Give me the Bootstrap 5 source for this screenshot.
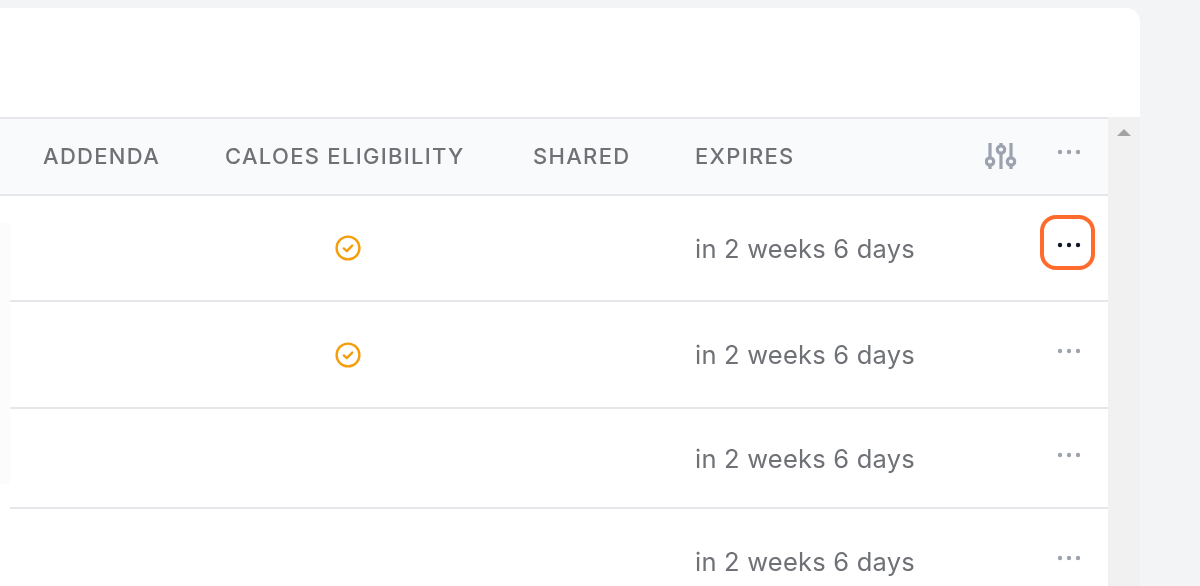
<!DOCTYPE html>
<html lang="en">
<head>
  <meta charset="UTF-8" />
  <title>Permits</title>
  <link href="https://cdn.jsdelivr.net/npm/bootstrap@5.3.0/dist/css/bootstrap.min.css" rel="stylesheet" />
  <style>
    html, body { height: 586px; overflow: hidden; }
    body { background: #f3f4f6; font-family: Inter, "Liberation Sans", sans-serif; }
    .sheet { width: 1140px; margin-top: 8px; background: #fff; border-top-right-radius: 14px; filter: blur(.45px); }
    .sheet-top { height: 109px; }
    .doc-table { width: 1108px; table-layout: fixed; border-collapse: separate; border-spacing: 0; }
    .doc-table th { height: 79px; background: #f9fafb; border-top: 2px solid #e5e7eb; border-bottom: 2px solid #e5e7eb; color: #6e7176; font-size: 22px; font-weight: 500; letter-spacing: 1.3px; vertical-align: middle; padding: 0; white-space: nowrap; }
    .doc-table td { border-bottom: 2px solid #e5e7eb; color: #6e7176; font-size: 25.5px; letter-spacing: .22px; vertical-align: middle; padding: 2px 0 0; white-space: nowrap; }
    .doc-table td.gutter { border-bottom: 0; }
    .tint-start { background: linear-gradient(#fff 27px, #fcfcfd 27px); }
    .tint-full { background: #fcfcfd; }
    .tint-end { background: linear-gradient(#fcfcfd 75px, #fff 75px); }
    .row-first { height: 106px; }
    .row-a { height: 107px; }
    .row-b { height: 100px; }
    .row-c { height: 104px; }
    .doc-table .pad-addenda { padding-left: 33px; }
    .check-mark { display: block; margin: 0 0 2px 110px; }
    .doc-table td.no-line { border-bottom: 0; }
    .tools { display: flex; align-items: center; }
    .dots-box { width: 55px; height: 55px; border: 4.5px solid transparent; border-radius: 16px; background: none; padding: 0; display: flex; align-items: center; justify-content: center; margin-left: 55px; margin-bottom: 13px; }
    .dots-box.is-marked { border-color: #ff6b2c; }
    .tools .dots-box { margin-left: 23px; margin-bottom: 14px; }
    .dots-icon { margin: 4px 0 0 2px; }
    .side-rail { width: 32px; background: #f1f1f1; }
    .rail-arrow { width: 0; height: 0; margin: 12px 0 0 9px; border-left: 7px solid transparent; border-right: 7px solid transparent; border-bottom: 7px solid #a3a3a3; }
  </style>
</head>
<body>

  <div class="sheet">
    <div class="sheet-top"></div>
    <div class="d-flex">
      <table class="doc-table">
        <colgroup>
          <col style="width:10px"><col style="width:215px"><col style="width:308px"><col style="width:162px"><col style="width:290px"><col style="width:123px">
        </colgroup>
        <thead>
          <tr>
            <th></th>
            <th class="pad-addenda">ADDENDA</th>
            <th>CALOES ELIGIBILITY</th>
            <th>SHARED</th>
            <th>EXPIRES</th>
            <th>
              <div class="tools">
                <svg width="32" height="32" viewBox="0 0 32 32" fill="none" stroke="#9ca3af" stroke-width="3.2" aria-hidden="true">
                  <path d="M5 2v15M5 24v4M16 2v3M16 12v16M26 2v15M26 24v4"/>
                  <circle cx="5" cy="20.5" r="3.7"/><circle cx="16" cy="8.5" r="3.7"/><circle cx="26" cy="20.5" r="3.7"/>
                </svg>
                <button type="button" class="dots-box">
                  <svg class="dots-icon" width="26" height="6" viewBox="0 0 26 6" fill="#9ca3af" aria-hidden="true"><circle cx="4" cy="3" r="2.2"/><circle cx="13" cy="3" r="2.2"/><circle cx="22" cy="3" r="2.2"/></svg>
                </button>
              </div>
            </th>
          </tr>
        </thead>
        <tbody>
          <tr class="row-first">
            <td class="gutter tint-start"></td><td></td>
            <td>
              <svg class="check-mark" width="26" height="26" viewBox="0 0 26 26" fill="none" stroke="#f59e0b" stroke-width="2.4" stroke-linecap="round" stroke-linejoin="round" aria-hidden="true"><circle cx="13" cy="13" r="11.4"/><path d="M8.8 13.4l3 2.8 5.4-5.6"/></svg>
            </td>
            <td></td><td>in 2 weeks 6 days</td>
            <td>
              <button type="button" class="dots-box is-marked">
                <svg class="dots-icon" width="26" height="6" viewBox="0 0 26 6" fill="#111827" aria-hidden="true"><circle cx="4" cy="3" r="2.2"/><circle cx="13" cy="3" r="2.2"/><circle cx="22" cy="3" r="2.2"/></svg>
              </button>
            </td>
          </tr>
          <tr class="row-a">
            <td class="gutter tint-full"></td><td></td>
            <td>
              <svg class="check-mark" width="26" height="26" viewBox="0 0 26 26" fill="none" stroke="#f59e0b" stroke-width="2.4" stroke-linecap="round" stroke-linejoin="round" aria-hidden="true"><circle cx="13" cy="13" r="11.4"/><path d="M8.8 13.4l3 2.8 5.4-5.6"/></svg>
            </td>
            <td></td><td>in 2 weeks 6 days</td>
            <td>
              <button type="button" class="dots-box">
                <svg class="dots-icon" width="26" height="6" viewBox="0 0 26 6" fill="#9ca3af" aria-hidden="true"><circle cx="4" cy="3" r="2.2"/><circle cx="13" cy="3" r="2.2"/><circle cx="22" cy="3" r="2.2"/></svg>
              </button>
            </td>
          </tr>
          <tr class="row-b">
            <td class="gutter tint-end"></td><td></td><td></td><td></td><td>in 2 weeks 6 days</td>
            <td>
              <button type="button" class="dots-box">
                <svg class="dots-icon" width="26" height="6" viewBox="0 0 26 6" fill="#9ca3af" aria-hidden="true"><circle cx="4" cy="3" r="2.2"/><circle cx="13" cy="3" r="2.2"/><circle cx="22" cy="3" r="2.2"/></svg>
              </button>
            </td>
          </tr>
          <tr class="row-c">
            <td class="gutter"></td><td class="no-line"></td><td class="no-line"></td><td class="no-line"></td><td class="no-line">in 2 weeks 6 days</td>
            <td class="no-line">
              <button type="button" class="dots-box">
                <svg class="dots-icon" width="26" height="6" viewBox="0 0 26 6" fill="#9ca3af" aria-hidden="true"><circle cx="4" cy="3" r="2.2"/><circle cx="13" cy="3" r="2.2"/><circle cx="22" cy="3" r="2.2"/></svg>
              </button>
            </td>
          </tr>
        </tbody>
      </table>
      <div class="side-rail flex-shrink-0">
        <div class="rail-arrow"></div>
      </div>
    </div>
  </div>

  <script src="https://cdn.jsdelivr.net/npm/bootstrap@5.3.0/dist/js/bootstrap.bundle.min.js"></script>
</body>
</html>
